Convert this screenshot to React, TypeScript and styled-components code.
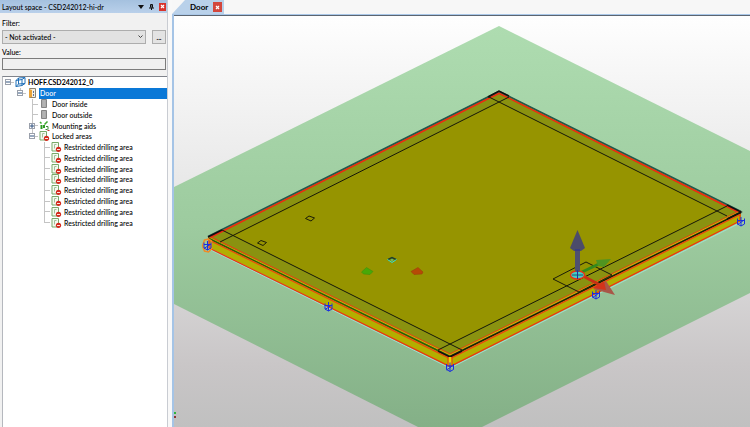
import React from "react";
import styled, { createGlobalStyle } from "styled-components";

const GlobalStyle = createGlobalStyle`
  *, *::before, *::after { box-sizing: border-box; }
  body { margin: 0; background: #f7f7f7; color: #000; }
  body, button, input, select {
    font-family: Lato, "Open Sans", sans-serif;
    font-size: 7px;
    line-height: 10px;
  }
  svg { display: block; flex: none; }
`;

const Workspace = styled.div`
  display: grid;
  grid-template-columns: 168px minmax(0, 1fr);
  column-gap: 4px;
  height: 100vh;
  background: #f8f8f8;
`;

/* ---------- side panel ---------- */

const Sidebar = styled.aside`
  display: flex;
  flex-direction: column;
  min-height: 0;
  background: #f1f1f1;
  border-right: 1px solid #c9ccd2;
`;

const PanelHeader = styled.header`
  display: flex;
  align-items: center;
  gap: 4px;
  height: 13px;
  padding: 0 1px 0 2px;
  background: linear-gradient(#a5c1df, #b9d0ea);
`;

const PanelTitle = styled.h1`
  flex: 1;
  margin: 0;
  font-size: 7px;
  font-weight: 500;
  white-space: nowrap;
`;

const HeaderButton = styled.button<{ $danger?: boolean }>`
  display: grid;
  place-items: center;
  width: 7px;
  height: 8px;
  padding: 0;
  border: 0;
  color: ${(p) => (p.$danger ? "#fff" : "#111")};
  background: ${(p) => (p.$danger ? "#d8342c" : "transparent")};
`;

const FilterForm = styled.form`
  display: flex;
  flex-direction: column;
  margin: 0;
  padding: 5px 1px 0 2px;
`;

const FieldLabel = styled.label`
  height: 10px;
  font-weight: 500;
`;

const FilterRow = styled.div`
  display: flex;
  gap: 6px;
  height: 14px;
  margin: 2px 0 3px;
`;

const SelectBox = styled.div`
  position: relative;
  flex: 1;
  svg { position: absolute; right: 3px; top: 5px; pointer-events: none; }
`;

const FilterSelect = styled.select`
  width: 100%;
  height: 14px;
  padding: 0 12px 0 2px;
  border: 1px solid #adadad;
  border-radius: 0;
  background: #e2e2e2;
  color: #000;
  font-weight: 500;
  appearance: none;
`;

const MoreButton = styled.button`
  width: 14px;
  height: 14px;
  padding: 0;
  border: 1px solid #adadad;
  background: #e3e3e3;
  color: #000;
  font-weight: 700;
`;

const ValueInput = styled.input`
  height: 12px;
  margin: 1px 0 6px;
  padding: 0 2px;
  border: 1px solid #7c7c7c;
  border-radius: 0;
  background: #f0f0f0;
`;

/* ---------- tree ---------- */

const TreePane = styled.div`
  flex: 1;
  min-height: 0;
  margin: 0 0 0 2px;
  border-top: 1px solid #80848c;
  border-left: 1px solid #b5b8be;
  background: #fff;
  overflow: hidden;
`;

const TreeList = styled.ul`
  display: grid;
  grid-template-rows: repeat(14, 1fr);
  height: 151px;
  margin: 0;
  padding: 0;
  list-style: none;
`;

const TreeRow = styled.li`
  display: flex;
  align-items: stretch;
  min-height: 0;
`;

const guideParts = {
  none: "none",
  full: "linear-gradient(#c4c4c4, #c4c4c4) 5px 0 / 1px 100% no-repeat, linear-gradient(#c4c4c4, #c4c4c4) 5px 5px / 6px 1px no-repeat",
  end: "linear-gradient(#c4c4c4, #c4c4c4) 5px 0 / 1px 6px no-repeat, linear-gradient(#c4c4c4, #c4c4c4) 5px 5px / 6px 1px no-repeat",
  stub: "linear-gradient(#c4c4c4, #c4c4c4) 5px 5px / 6px 1px no-repeat",
};

const Guide = styled.span<{ $kind: keyof typeof guideParts }>`
  display: flex;
  align-items: center;
  justify-content: flex-start;
  flex: none;
  width: 12px;
  padding-left: 2px;
  background: ${(p) => guideParts[p.$kind]};
`;

const Toggle = styled.button`
  display: grid;
  place-items: center;
  width: 6px;
  height: 6px;
  padding: 0;
  border: 1px solid #9aa0ab;
  background: #fff;
`;

const IconCell = styled.span`
  display: flex;
  align-items: center;
  justify-content: flex-start;
  flex: none;
  width: 12px;
`;

const NodeText = styled.span<{ $selected?: boolean; $bold?: boolean }>`
  display: flex;
  align-items: center;
  flex: ${(p) => (p.$selected ? 1 : "none")};
  padding: 0 1px;
  white-space: nowrap;
  font-weight: ${(p) => (p.$bold ? 700 : 500)};
  color: ${(p) => (p.$selected ? "#fff" : "#000")};
  background: ${(p) => (p.$selected ? "#0a78d7" : "transparent")};
`;

/* ---------- viewport ---------- */

const Main = styled.main`
  display: flex;
  flex-direction: column;
  min-width: 0;
  min-height: 0;
`;

const TabBar = styled.nav`
  display: flex;
  height: 14px;
  background: #f7f7f7;
`;

const Tab = styled.div`
  display: flex;
  align-items: center;
  gap: 5px;
  height: 14px;
  padding: 0 2px 0 18px;
  background: #b9d1ea;
  clip-path: polygon(0 100%, 13px 0, 100% 0, 100% 100%);
`;

const TabName = styled.button`
  padding: 0;
  border: 0;
  background: none;
  color: #000;
  font-size: 8px;
  font-weight: 700;
`;

const TabClose = styled.button`
  display: grid;
  place-items: center;
  width: 9px;
  height: 10px;
  padding: 0;
  border: 0;
  background: #d3473d;
`;

const Viewport = styled.section`
  flex: 1;
  min-height: 0;
  border-top: 1px solid #a9c7e8;
  border-left: 2px solid #a5c4e6;
  svg { width: 100%; height: 100%; border-top: 1px solid #5c6570; }
`;

/* ---------- icons ---------- */

const CloseMark = () => (
  <svg width="5" height="5" viewBox="0 0 5 5" aria-hidden>
    <path d="M1 1l3 3M4 1l-3 3" stroke="#fff" strokeWidth="1.2" />
  </svg>
);

const ProjectIcon = () => (
  <svg width="11" height="10" viewBox="0 0 11 10" fill="none" stroke="#2170b8" aria-hidden>
    <path d="M1 3.500l6-1v6l-6 1zM3.500 1l6.500-.5v6l-3 2M1 3.500l2.500-2.500M7 2.500l3-2M3.500 1v6l6.500-.5M3.500 7l-2.500 2.500" />
  </svg>
);

const DoorIcon = () => (
  <svg width="10" height="10" viewBox="0 0 10 10" aria-hidden>
    <path d="M2.500.500h6v9h-6z" fill="#f4f0e4" stroke="#8b8371" />
    <path d="M2 1l3 1v7l-3 .5z" fill="#e8a33a" />
    <path d="M6.500 3v2M6.500 6v2" stroke="#5b6f95" />
  </svg>
);

const FaceIcon = () => (
  <svg width="9" height="9" viewBox="0 0 9 9" aria-hidden>
    <path d="M2.500.500h5v8h-5z" fill="#acacac" stroke="#848484" />
    <path d="M5 1v7" stroke="#b9b9b9" />
  </svg>
);

const MountingIcon = () => (
  <svg width="11" height="10" viewBox="0 0 11 10" fill="none" aria-hidden>
    <path d="M5.500 3.500l3-3M1 1l1.500 1.500" stroke="#3faa2e" strokeWidth="1.500" />
    <path d="M2.500 4v4M5 4v3" stroke="#2d9b22" strokeWidth="2" />
    <path d="M7 5.500h2v3M6.500 8.500h2" stroke="#3c8a35" />
    <path d="M8.500 9.500h2" stroke="#c2402f" />
  </svg>
);

const LockedIcon = () => (
  <svg width="11" height="10" viewBox="0 0 11 10" aria-hidden>
    <path d="M1 .500h6.500v8.500h-6.500z" fill="#f4faf0" stroke="#78a968" />
    <path d="M5.500 2.500h-2v4" fill="none" stroke="#a5bf9b" />
    <circle cx="7.500" cy="7.300" r="2.600" fill="#d42a1e" />
    <path d="M6 7.500h3" stroke="#fbe4dc" />
  </svg>
);

const icons = {
  project: ProjectIcon,
  door: DoorIcon,
  face: FaceIcon,
  mounting: MountingIcon,
  locked: LockedIcon,
};

type TreeNode = {
  label: string;
  icon: keyof typeof icons;
  guides: (keyof typeof guideParts)[];
  toggle?: "open" | "closed";
  bold?: boolean;
  selected?: boolean;
};

const nodes: TreeNode[] = [
  { label: "HOFF.CSD242012_0", icon: "project", guides: ["stub"], toggle: "open", bold: true },
  { label: "Door", icon: "door", guides: ["none", "end"], toggle: "open", selected: true },
  { label: "Door inside", icon: "face", guides: ["none", "none", "full"] },
  { label: "Door outside", icon: "face", guides: ["none", "none", "full"] },
  { label: "Mounting aids", icon: "mounting", guides: ["none", "none", "full"], toggle: "closed" },
  { label: "Locked areas", icon: "locked", guides: ["none", "none", "end"], toggle: "open" },
  ...Array.from({ length: 8 }, (_, i): TreeNode => ({
    label: "Restricted drilling area",
    icon: "locked",
    guides: ["none", "none", "none", i === 7 ? "end" : "full"],
  })),
];

const TreeItem = ({ node }: { node: TreeNode }) => {
  const Icon = icons[node.icon];
  return (
    <TreeRow>
      {node.guides.map((kind, i) => (
        <Guide key={i} $kind={kind}>
          {node.toggle && i === node.guides.length - 1 && (
            <Toggle type="button" aria-label={`Toggle ${node.label}`}>
              <svg width="4" height="4" viewBox="0 0 4 4" aria-hidden>
                <path d={node.toggle === "open" ? "M0 2h4" : "M0 2h4M2 0v4"} stroke="#31527f" />
              </svg>
            </Toggle>
          )}
        </Guide>
      ))}
      <IconCell><Icon /></IconCell>
      <NodeText $selected={node.selected} $bold={node.bold}>{node.label}</NodeText>
    </TreeRow>
  );
};

/* ---------- scene ---------- */

const Anchor = ({ x, y, halo }: { x: number; y: number; halo?: boolean }) => (
  <g transform={`translate(${x} ${y})`} fill="none">
    {halo && <path d="M-3-5.500l4-1 3 2v8l-3 3-4-1-2-5z" stroke="#f08a24" strokeWidth="1.500" />}
    <path d="M-3.500-3v5.500l3.500 2 3.500-2v-5.500M0-4.500v9M-3.500-1h7M-3.500 3l6-4" stroke="#1b2ee0" />
  </g>
);

const Scene = () => (
  <svg viewBox="174 16 576 411" preserveAspectRatio="xMidYMid slice" role="img" aria-label="Door mounting surface">
    <defs>
      <linearGradient id="sky" x1="0" y1="16" x2="0" y2="427" gradientUnits="userSpaceOnUse">
        <stop offset="0" stopColor="#fefefe" />
        <stop offset="0.450" stopColor="#e6e6e6" />
        <stop offset="0.850" stopColor="#c9c6c7" />
        <stop offset="1" stopColor="#c0c0c0" />
      </linearGradient>
      <linearGradient id="ground" x1="0" y1="26" x2="0" y2="427" gradientUnits="userSpaceOnUse">
        <stop offset="0" stopColor="#aedcb0" />
        <stop offset="0.500" stopColor="#9dcb9f" />
        <stop offset="1" stopColor="#84b087" />
      </linearGradient>
    </defs>
    <path d="M174 16h576v411h-576z" fill="url(#sky)" />
    <path d="M499 26L754 153V291L480 428H420L170 302V189z" fill="url(#ground)" />

    <path d="M208 237L210 248L450 367L741 221V212L450 356z" fill="#b3ae00" />
    <path d="M209 249L450 368L742 222" fill="none" stroke="#9fe0d0" />
    <path d="M209 237V248L450 366.500L740 221V213" fill="none" stroke="#f03010" strokeWidth="1.200" />
    <path d="M499 91L741 212L450 356L208 237z" fill="#8a9210" />
    <path d="M499 102L717 211L450 344L232 235z" fill="#969400" />
    <path d="M208 236.500L499 91.500L741 211.500" fill="none" stroke="#24564e" strokeWidth="1.600" />
    <path d="M210 237.500L499 93.300L739 212.500" fill="none" stroke="#f52412" strokeWidth="1.400" />
    <path d="M210 236.500L450 354L740 210.500" fill="none" stroke="#f03814" />
    <path d="M210 238L450 355L740 211.500" fill="none" stroke="#cdbb00" />
    <path d="M209 238.500L450 356.500" stroke="#2c5a08" strokeWidth="1.500" />
    <path d="M450 356.500L741 212.500" stroke="#1b1d08" strokeWidth="1.500" />
    <path d="M210 240.500L450 358.500L740 214.500" fill="none" stroke="#f04010" strokeWidth="1.200" />
    <path d="M208 237L222 230M488 97L499 91L509 96M727 205L741 212L727 219M438 351L450 357L462 351" fill="none" stroke="#111" strokeWidth="1.500" />
    <path d="M220 242L509 97M488 96.500L727 216M222 230L462 350M438 350L727 206" stroke="#15170a" fill="none" />
    <path d="M450 357v8" stroke="#e8d800" strokeWidth="3" />
    <path d="M448 357v9M452 357v9" stroke="#ea3a10" />

    <path d="M305.500 218.500L309 216L314.500 218L311 221zM257.500 243L261 240.500L266.500 242.500L263 245.500z" fill="none" stroke="#1b1d08" />
    <path d="M388 259.500l4-2 4 2" fill="none" stroke="#1d4030" strokeWidth="1.500" />
    <path d="M387.500 259.500l4.500 3 4.500-3M391 260h2" fill="none" stroke="#2de0d8" />
    <path d="M361.500 272l5-4.500 6.500 4-3 3-6.500-.5z" fill="#48a808" stroke="#3b8d0c" strokeWidth=".5" />
    <path d="M423 272l-5-4.500-7 4 3 3 8-.5z" fill="#b64a06" stroke="#963c0c" strokeWidth=".5" />

    <path d="M553 279L586 262L612 275L579 292z" fill="none" stroke="#1b1d08" />
    <path d="M582 272L601 263" stroke="#348a1c" strokeWidth="3" />
    <path d="M596 260L611 259L604 267L598 266z" fill="#4f9420" />
    <Anchor x={596} y={294.500} />
    <path d="M583 276L600 285" stroke="#c83014" strokeWidth="3" />
    <path d="M606 281L615 295L593 289z" fill="#a95748" />
    <path d="M604 281L606 290L593 288z" fill="#d3341a" />
    <ellipse cx="577.500" cy="275" rx="7" ry="4" fill="#45cdc7" stroke="#ea3218" strokeWidth="1.400" />
    <path d="M572 275h11M577.500 272v6" stroke="#175b70" />
    <path d="M575 249h5v22l-2.500 1.500-2.500-1.500z" fill="#4e5070" />
    <path d="M577.500 230L585 248L581 251H574L570 248z" fill="#4c4c6a" />
    <path d="M575 250h5M577.500 270v9" stroke="#28309a" />

    <Anchor x={207.500} y={245.500} halo />
    <Anchor x={328.500} y={306.500} />
    <Anchor x={450} y={367} />
    <Anchor x={741} y={221.500} />
    <path d="M174 412h2v2h-2z" fill="#2fb43c" />
    <path d="M174 416h2v2h-2z" fill="#8e3434" />
  </svg>
);

export default function App() {
  return (
    <Workspace>
      <GlobalStyle />
      <Sidebar>
        <PanelHeader>
          <PanelTitle>Layout space - CSD242012-hi-dr</PanelTitle>
          <HeaderButton type="button" aria-label="Panel menu">
            <svg width="6" height="4" viewBox="0 0 6 4"><path d="M0 0h6l-3 4z" fill="currentColor" /></svg>
          </HeaderButton>
          <HeaderButton type="button" aria-label="Pin panel">
            <svg width="5" height="6" viewBox="0 0 5 6" fill="none" stroke="currentColor">
              <path d="M1.500 3.500V.500h2v3M3 1v3M0 4h5M2.500 4v2" />
            </svg>
          </HeaderButton>
          <HeaderButton type="button" aria-label="Close panel" $danger><CloseMark /></HeaderButton>
        </PanelHeader>
        <FilterForm>
          <FieldLabel htmlFor="filter">Filter:</FieldLabel>
          <FilterRow>
            <SelectBox>
              <FilterSelect id="filter" defaultValue="none">
                <option value="none">- Not activated -</option>
              </FilterSelect>
              <svg width="5" height="4" viewBox="0 0 5 4" fill="none" stroke="#444">
                <path d="M.5.500l2 2 2-2" />
              </svg>
            </SelectBox>
            <MoreButton type="button" aria-label="Edit filter">...</MoreButton>
          </FilterRow>
          <FieldLabel htmlFor="value">Value:</FieldLabel>
          <ValueInput id="value" type="text" />
        </FilterForm>
        <TreePane>
          <TreeList>
            {nodes.map((node, i) => <TreeItem key={i} node={node} />)}
          </TreeList>
        </TreePane>
      </Sidebar>
      <Main>
        <TabBar>
          <Tab>
            <TabName type="button">Door</TabName>
            <TabClose type="button" aria-label="Close Door"><CloseMark /></TabClose>
          </Tab>
        </TabBar>
        <Viewport><Scene /></Viewport>
      </Main>
    </Workspace>
  );
}
